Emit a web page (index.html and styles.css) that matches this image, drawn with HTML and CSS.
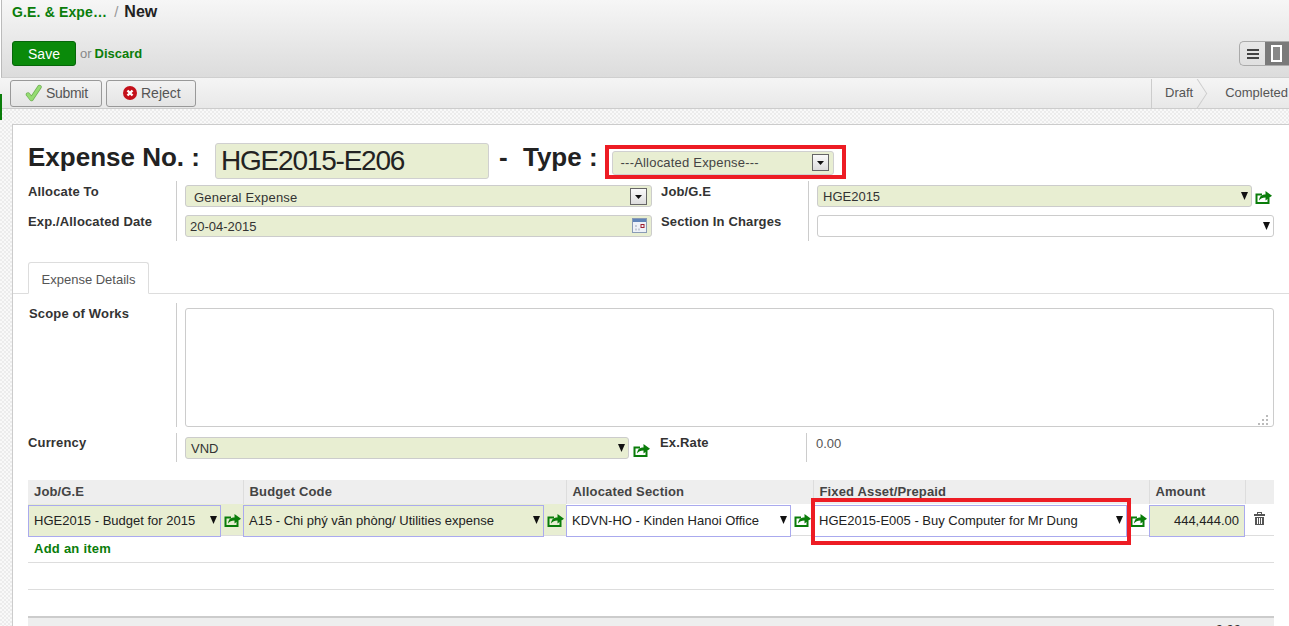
FILE: index.html
```html
<!DOCTYPE html>
<html>
<head>
<meta charset="utf-8">
<title>G.E. &amp; Expense / New</title>
<link rel="stylesheet" href="styles.css">
</head>
<body>
<svg class="defs" width="0" height="0">
  <symbol id="share" viewBox="0 0 17 14">
    <path d="M7 4.500H1.500v8.500h12V8" fill="none" stroke="#0a7d0a" stroke-width="2"/>
    <path d="M4 10.500c.5-4.500 3-6 6.500-6V1l6.500 4.800-6.500 4.700V7.500c-3 0-5 1-6.500 3z" fill="#0a7d0a"/>
  </symbol>
  <symbol id="arrow" viewBox="0 0 7 8">
    <path d="M0 0h7L3.500 8z" fill="#111"/>
  </symbol>
</svg>
<div class="edge-mark"></div>

<div class="head">
  <div class="crumbs"><a class="crumb-link">G.E. &amp; Expe…</a><span class="crumb-sep">/</span><span class="crumb-now">New</span></div>
  <div class="head-actions">
    <button class="btn-save">Save</button>
    <span class="or">or</span>
    <a class="discard">Discard</a>
    <div class="switch">
      <span class="switch-list"><i></i><i></i><i></i></span>
      <span class="switch-form"><i></i></span>
    </div>
  </div>
</div>

<div class="statusbar">
  <button class="btn btn-submit">
    <svg class="ico" width="17" height="18" viewBox="0 0 17 18"><path d="M3 10.500l3.500 4.500L14.500 3" fill="none" stroke="#6fae55" stroke-width="4.400" stroke-linecap="round" stroke-linejoin="round"/><path d="M3 10.500l3.500 4.500L14.500 3" fill="none" stroke="#95dc72" stroke-width="3" stroke-linecap="round" stroke-linejoin="round"/></svg>
    Submit
  </button>
  <button class="btn btn-reject">
    <svg class="ico" width="14" height="14" viewBox="0 0 14 14"><circle cx="7" cy="7" r="7" fill="#c4101a"/><path d="M4.500 4.500l5 5m0-5l-5 5" stroke="#fff" stroke-width="2.400"/></svg>
    Reject
  </button>
  <div class="steps">
    <span class="step step-draft">Draft</span>
    <span class="step">Completed</span>
  </div>
</div>

<div class="page">
  <div class="sheet">
    <div class="title-row">
      <span class="title-label">Expense No. :</span>
      <div class="title-input">HGE2015-E206</div>
      <span class="title-dash">-</span>
      <span class="title-label">Type :</span>
      <div class="type-mark">
        <div class="type-select">---Allocated Expense---<span class="drop-box"><svg width="7" height="4" viewBox="0 0 7 4"><path d="M0 0h7L3.500 4z" fill="#111"/></svg></span></div>
      </div>
    </div>

    <div class="fields">
      <div class="lbl">Allocate To</div>
      <div class="val">
        <div class="ctl req ctl-general">General Expense<span class="drop-box"><svg width="7" height="4" viewBox="0 0 7 4"><path d="M0 0h7L3.500 4z" fill="#111"/></svg></span></div>
      </div>
      <div class="lbl lbl-b">Job/G.E</div>
      <div class="val val-icon">
        <div class="ctl req grow">HGE2015<svg class="arrow"><use href="#arrow"/></svg></div>
        <svg class="share"><use href="#share"/></svg>
      </div>
      <div class="lbl">Exp./Allocated Date</div>
      <div class="val">
        <div class="ctl req ctl-date">20-04-2015
          <svg class="cal" width="15" height="15" viewBox="0 0 15 15"><rect x=".5" y=".5" width="14" height="14" fill="#eef2f8" stroke="#8a9bb5"/><rect x="1" y="1" width="13" height="3" fill="#5f84b8"/><path d="M3 7h2v2H3zM3 10.500h2v2H3zM6 10.500h2v2H6z" fill="#c5cbd6"/><rect x="9" y="6.500" width="3" height="3" fill="none" stroke="#a02030"/></svg>
        </div>
      </div>
      <div class="lbl lbl-b">Section In Charges</div>
      <div class="val">
        <div class="ctl blank"><svg class="arrow"><use href="#arrow"/></svg></div>
      </div>
    </div>

    <div class="tabs"><span class="tab">Expense Details</span></div>

    <div class="scope">
      <div class="lbl">Scope of Works</div>
      <div class="scope-val">
        <textarea class="scope-text"></textarea>
        <svg class="grip" width="10" height="10" viewBox="0 0 10 10"><path d="M8 0h2v2H8zM4 4h2v2H4zM8 4h2v2H8zM0 8h2v2H0zM4 8h2v2H4zM8 8h2v2H8z" fill="#bbb"/></svg>
      </div>
    </div>

    <div class="currency">
      <div class="lbl">Currency</div>
      <div class="val val-icon cur-val">
        <div class="ctl req grow">VND<svg class="arrow"><use href="#arrow"/></svg></div>
        <svg class="share"><use href="#share"/></svg>
      </div>
      <div class="lbl lbl-b">Ex.Rate</div>
      <div class="rate">0.00</div>
    </div>

    <table class="lines">
      <colgroup>
        <col class="c-job"><col class="c-budget"><col class="c-section"><col class="c-fixed"><col class="c-amount"><col>
      </colgroup>
      <thead>
        <tr><th>Job/G.E</th><th>Budget Code</th><th>Allocated Section</th><th>Fixed Asset/Prepaid</th><th>Amount</th><th></th></tr>
      </thead>
      <tbody>
        <tr class="line">
          <td class="tint"><div class="cell"><div class="cell-ctl req">HGE2015 - Budget for 2015<svg class="arrow"><use href="#arrow"/></svg></div><svg class="share"><use href="#share"/></svg></div></td>
          <td class="tint"><div class="cell"><div class="cell-ctl req">A15 - Chi phý văn phòng/ Utilities expense<svg class="arrow"><use href="#arrow"/></svg></div><svg class="share"><use href="#share"/></svg></div></td>
          <td><div class="cell"><div class="cell-ctl">KDVN-HO - Kinden Hanoi Office<svg class="arrow"><use href="#arrow"/></svg></div><svg class="share"><use href="#share"/></svg></div></td>
          <td class="fixed"><div class="cell"><div class="cell-ctl">HGE2015-E005 - Buy Computer for Mr Dung<svg class="arrow"><use href="#arrow"/></svg></div><svg class="share"><use href="#share"/></svg></div><div class="red-mark"></div></td>
          <td><div class="cell-ctl req amount">444,444.00</div></td>
          <td class="trash-cell">
            <svg width="11" height="13" viewBox="0 0 11 13"><path d="M3 2V0h5v2h3v2H0V2zm1 0h3V1H4z" fill="#555" fill-rule="evenodd"/><path d="M1 5h9v8H1zM3 6v6h1V6zm2 0v6h1V6zm2 0v6h1V6z" fill="#555" fill-rule="evenodd"/></svg>
          </td>
        </tr>
        <tr class="add"><td colspan="6"><a class="add-link">Add an item</a></td></tr>
        <tr class="empty"><td colspan="6"></td></tr>
      </tbody>
    </table>
    <div class="total"><span>0.00</span></div>
  </div>
</div>
</body>
</html>
```

FILE: styles.css
```css
html, body { margin: 0; height: 626px; overflow: hidden; }
body {
  font: 13px "Liberation Sans", Arial, sans-serif;
  color: #333;
  background: #fff;
}
.defs { position: absolute; }
a { color: #0a7d0a; font-weight: bold; }
.edge-mark { position: absolute; left: 0; top: 94px; width: 2px; height: 26px; background: #0a7d0a; }

/* top header */
.head {
  height: 78px;
  margin-left: 1px;
  padding: 3px 0 0 10px;
  box-sizing: border-box;
  background: linear-gradient(#f6f6f6, #dcdcdc);
  border-left: 1px solid #bbb;
  border-bottom: 1px solid #cfcfcf;
}
.crumbs { height: 36px; font-size: 14px; font-weight: bold; line-height: 17px; }
.crumb-link { color: #0a7d0a; letter-spacing: .15px; }
.crumb-sep { color: #999; font-weight: normal; margin: 0 6px 0 7px; font-size: 15px; }
.crumb-now { color: #222; font-size: 16px; }
.head-actions { display: flex; align-items: center; height: 27px; margin-top: 1px; }
.btn-save {
  width: 64px;
  height: 25px;
  padding: 0;
  font: 14px "Liberation Sans", Arial, sans-serif;
  color: #fff;
  background: #0a8a0a;
  border: 1px solid #06660a;
  border-radius: 3px;
}
.or { margin: 0 3px 0 4px; color: #888; }
.discard { font-size: 13px; }
.switch {
  display: flex;
  margin-left: auto;
  width: 50px;
  height: 25px;
  box-sizing: border-box;
  border: 1px solid #aaa;
  border-right: 0;
  border-radius: 5px 0 0 5px;
  overflow: hidden;
}
.switch-list {
  width: 25px;
  display: flex;
  flex-direction: column;
  justify-content: center;
  align-items: center;
  gap: 2px;
}
.switch-list i { width: 12px; height: 2px; background: #444; }
.switch-form {
  flex: 1;
  background: #7a7a7a;
  display: flex;
  align-items: center;
  justify-content: center;
}
.switch-form i { width: 7px; height: 13px; border: 2px solid #fff; background: #888; margin-right: 2px; }

/* status bar */
.statusbar {
  display: flex;
  align-items: center;
  height: 31px;
  padding-left: 10px;
  box-sizing: border-box;
  background: linear-gradient(#f5f5f5, #e8e8e8);
  border-bottom: 1px solid #ccc;
}
.btn {
  display: flex;
  align-items: center;
  height: 27px;
  margin-right: 4px;
  font: 14px "Liberation Sans", Arial, sans-serif;
  color: #555;
  background: linear-gradient(#f2f2f2, #e4e4e4);
  border: 1px solid #999;
  border-radius: 3px;
}
.btn-submit { width: 92px; padding: 0 0 0 14px; letter-spacing: -.3px; }
.btn-reject { width: 90px; padding: 0 0 0 16px; }
.ico { margin-right: 4px; flex: none; }
.steps {
  display: flex;
  flex: none;
  width: 137px;
  height: 29px;
  margin-left: auto;
  overflow: hidden;
  border-left: 1px solid #ccc;
}
.step { line-height: 28px; padding-left: 13px; color: #555; white-space: nowrap; font-size: 13px; }
.step-draft { position: relative; padding-right: 19px; }
.step-draft::after {
  content: "";
  position: absolute;
  right: 6px;
  top: 4px;
  width: 20px;
  height: 20px;
  transform: rotate(45deg) skew(12deg, 12deg);
  border-top: 1px solid #ccc;
  border-right: 1px solid #ccc;
}

/* dotted page background and sheet */
.page {
  height: 517px;
  padding: 15px 0 0 12px;
  box-sizing: border-box;
  background: repeating-conic-gradient(#ececec 0 25%, #f9f9f9 0 50%) 0 0 / 4px 4px;
}
.sheet {
  height: 503px;
  padding: 18px 15px 0 15px;
  box-sizing: border-box;
  background: #fff;
  border: 1px solid #ccc;
  border-right: 0;
  overflow: hidden;
}

.title-row { display: flex; align-items: flex-start; height: 38px; color: #222; }
.title-label { font-size: 26px; font-weight: bold; line-height: 28px; }
.title-input {
  width: 274px;
  height: 36px;
  margin-left: 15px;
  padding-left: 5px;
  box-sizing: border-box;
  font-size: 28px;
  letter-spacing: -1.2px;
  line-height: 34px;
  background: #e8eed2;
  border: 1px solid #d0d0d0;
  border-radius: 3px;
}
.title-dash { width: 34px; padding-right: 5px; box-sizing: border-box; text-align: center; font-size: 26px; font-weight: bold; line-height: 28px; }
.type-mark {
  width: 241px;
  height: 34px;
  margin: 2px 0 0 7px;
  padding: 2px 8px 0 3px;
  box-sizing: border-box;
  border: 4px solid #ed1c24;
}
.type-select {
  position: relative;
  height: 22px;
  padding-left: 8px;
  line-height: 22px;
  letter-spacing: .2px;
  color: #444;
  background: #e8eed2;
  border: 1px solid #d0d0d0;
  border-radius: 3px;
}
.drop-box {
  position: absolute;
  right: 4px;
  top: 2px;
  width: 15px;
  height: 15px;
  display: flex;
  align-items: center;
  justify-content: center;
  background: linear-gradient(#fafafa, #ddd);
  border: 1px solid #666;
}

/* form grid */
.lbl { font-weight: bold; letter-spacing: .15px; color: #333; padding-top: 4px; border-right: 1px solid #ccc; line-height: 14px; }
.lbl-b { padding-left: 1px; }
.fields {
  display: grid;
  grid-template-columns: 149px 483px 149px 1fr;
  grid-auto-rows: 30px;
}
.val { padding: 4px 8px 0 8px; box-sizing: border-box; }
.fields .val:nth-child(4), .fields .val:last-child { padding-right: 0; }
.val-icon { display: flex; align-items: flex-start; }
.fields .share { margin-right: 2px; }
.ctl {
  position: relative;
  height: 22px;
  padding-left: 5px;
  box-sizing: border-box;
  line-height: 22px;
  color: #333;
  border: 1px solid #ccc;
  border-radius: 3px;
}
.req { background: #e8eed2; }
.blank { background: #fff; }
.grow { flex: 1; }
.ctl-general { padding-left: 8px; line-height: 23px; letter-spacing: .2px; }
.ctl-date { padding-left: 4px; }
.arrow { position: absolute; right: 3px; top: 6px; width: 7px; height: 8px; }
.share { width: 17px; height: 14px; margin: 5px 0 0 3px; flex: none; }
.cal { position: absolute; right: 4px; top: 2px; }

.tabs { height: 53px; margin: 0 -15px 0 -15px; padding: 21px 0 0 15px; box-sizing: border-box; border-bottom: 1px solid #ddd; }
.tab {
  display: block;
  width: 121px;
  height: 32px;
  box-sizing: border-box;
  text-align: center;
  line-height: 33px;
  color: #555;
  background: #fff;
  border: 1px solid #ddd;
  border-bottom: 1px solid #fff;
  border-radius: 3px 3px 0 0;
}

.scope { display: grid; grid-template-columns: 149px 1fr; height: 122px; margin-top: 9px; }
.scope .lbl { padding-top: 4px; padding-left: 1px; }
.scope-val { position: relative; padding: 5px 0 0 8px; }
.scope-text {
  display: block;
  width: 100%;
  height: 119px;
  box-sizing: border-box;
  border: 1px solid #ccc;
  border-radius: 3px;
  resize: none;
}
.grip { position: absolute; right: 6px; bottom: 2px; }

.currency { display: grid; grid-template-columns: 149px 482px 148px 1fr; height: 29px; margin-top: 8px; }
.currency .lbl { padding-top: 3px; }
.cur-val { padding: 4px 9px 0 8px; }
.cur-val .share { margin-left: 4px; margin-top: 6px; }
.rate { padding: 3px 0 0 9px; line-height: 15px; color: #555; }

/* lines table */
.lines { width: 100%; margin-top: 18px; border-collapse: collapse; table-layout: fixed; }
.c-job { width: 215px; }
.c-budget { width: 323px; }
.c-section { width: 247px; }
.c-fixed { width: 336px; }
.c-amount { width: 96px; }
.lines th {
  height: 22px;
  padding: 0 0 2px 6px;
  text-align: left;
  font-weight: bold;
  letter-spacing: .15px;
  color: #444;
  background: #eee;
  border-left: 1px solid #ddd;
}
.lines th:first-child { border-left: 0; }
.line td { height: 31px; padding: 0; border-bottom: 1px solid #ddd; }
.line td.tint { background: #e8eed2; }
.cell { display: flex; align-items: flex-start; }
.cell-ctl {
  position: relative;
  flex: 1;
  height: 32px;
  padding-left: 5px;
  box-sizing: border-box;
  line-height: 30px;
  color: #222;
  background: #fff;
  border: 1px solid #aaaaee;
  margin-bottom: -2px;
  white-space: nowrap;
}
.cell-ctl.req { background: #e8eed2; }
.cell-ctl .arrow { top: 10px; right: 3px; }
.cell .share { margin: 8px 2px 0 3px; }
.amount { text-align: right; padding-right: 5px; }
.fixed { position: relative; }
.red-mark {
  position: absolute;
  left: -2px;
  right: 18px;
  top: -6px;
  bottom: -10px;
  border: 4px solid #ed1c24;
}
.trash-cell { text-align: center; vertical-align: middle; }
.add td { height: 26px; padding: 0 0 0 6px; border-bottom: 1px solid #ddd; line-height: 26px; }
.add-link { letter-spacing: .25px; }
.empty td { height: 26px; padding: 0; border-bottom: 1px solid #ddd; }
.total {
  height: 20px;
  margin-top: 26px;
  padding-right: 33px;
  text-align: right;
  font-weight: bold;
  background: #eee;
  border-top: 2px solid #ccc;
  line-height: 24px;
}
```
